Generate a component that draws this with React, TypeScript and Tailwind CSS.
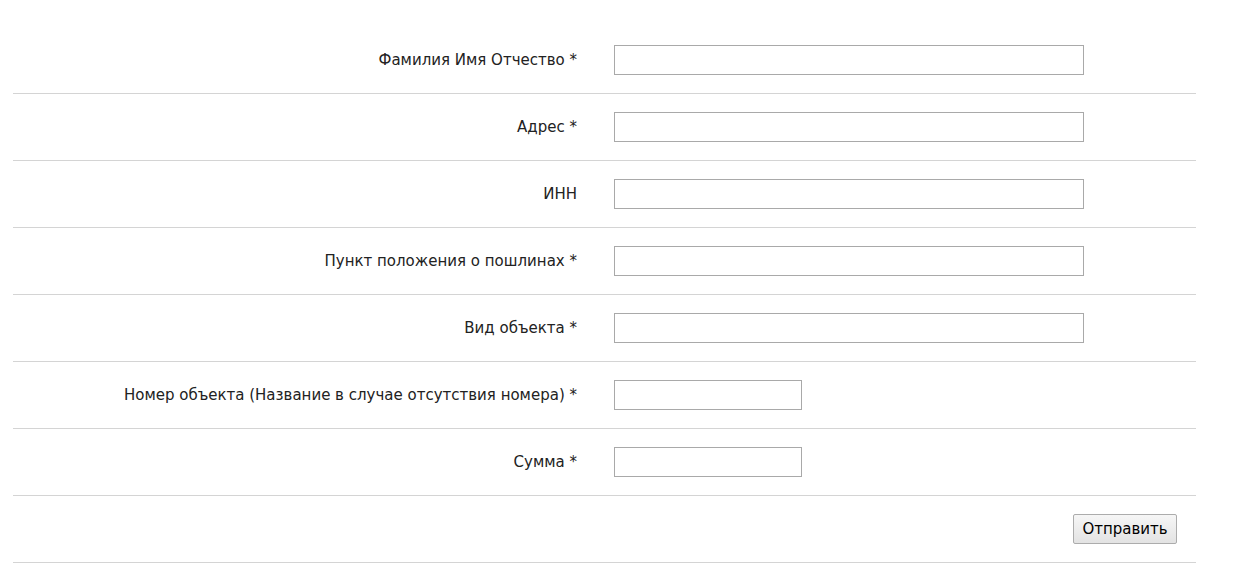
const fields = [
  { label: "Фамилия Имя Отчество *", short: false },
  { label: "Адрес *", short: false },
  { label: "ИНН", short: false },
  { label: "Пункт положения о пошлинах *", short: false },
  { label: "Вид объекта *", short: false },
  { label: "Номер объекта (Название в случае отсутствия номера) *", short: true },
  { label: "Сумма *", short: true },
];

export default function App() {
  return (
    <div className="min-h-[566px] bg-white pt-[27px] pl-[13px] font-['DejaVu_Sans',sans-serif] text-[15px] text-[#222]">
      <form className="w-[1183px]">
        {fields.map((f) => (
          <div key={f.label} className="flex h-[67px] items-center border-b border-[#d4d4d4]">
            <label className="w-[564px] pt-[1px] text-right">{f.label}</label>
            <div className="ml-[37px]">
              <input
                type="text"
                className={`block h-[30px] border border-[#a9a9a9] bg-white ${f.short ? "w-[188px]" : "w-[470px]"}`}
              />
            </div>
          </div>
        ))}
        <div className="flex h-[67px] items-center justify-end border-b border-[#d4d4d4] pr-[19px]">
          <button
            type="submit"
            className="h-[30px] w-[104px] rounded-[2px] border border-[#acacac] bg-gradient-to-b from-[#f6f6f6] to-[#e3e3e3] text-[15px] text-black"
          >
            Отправить
          </button>
        </div>
      </form>
    </div>
  );
}
